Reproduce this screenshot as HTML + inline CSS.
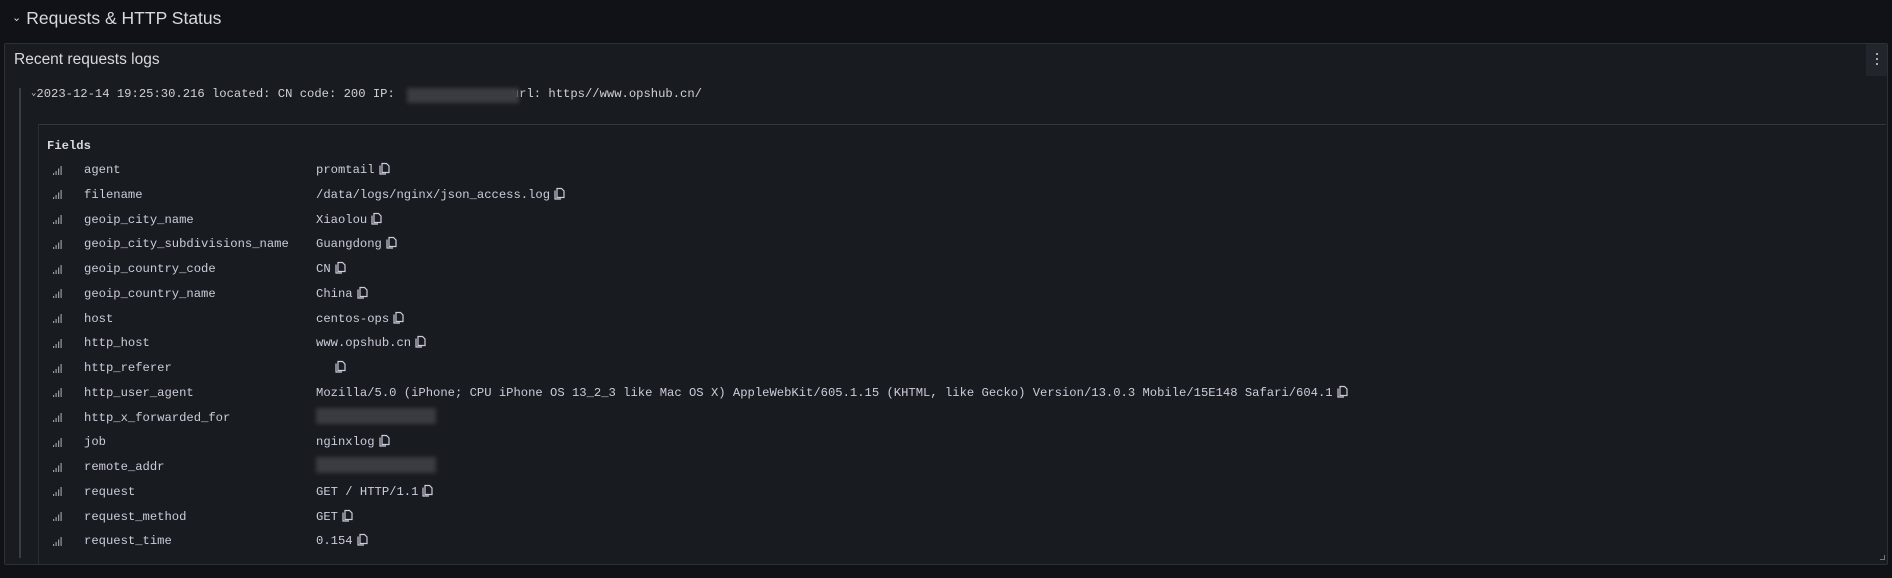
<!DOCTYPE html>
<html><head><meta charset="utf-8"><style>
*{margin:0;padding:0;box-sizing:border-box}
body{width:1892px;height:578px;background:#111217;color:#ccccdc;font-family:"Liberation Sans",sans-serif;overflow:hidden;position:relative}
.title{position:absolute;left:12px;top:8px;font-size:17.5px;color:#d8d9e0}
.title .chev{font-size:11px;margin-right:5px;position:relative;top:-3px}
.panel{position:absolute;left:4px;top:43px;width:1884px;height:522px;background:#181b1f;border:1px solid #2d3036;border-radius:2px}
.ptitle{position:absolute;left:9px;top:7px;font-size:15.5px;color:#d8d9e0}
.menu{position:absolute;right:0;top:0;width:21px;height:32px;background:#22252b;border-radius:2px}
.menu i{position:absolute;left:10px;width:2px;height:2px;background:#aaa}
.bar{position:absolute;left:14px;top:44px;width:2px;height:470px;background:#3a3d44}
.mono{font-family:"Liberation Mono",monospace;font-size:12.2px;white-space:pre}
.logline{position:absolute;left:26px;top:43px;color:#d0d1d8}
.blur{position:absolute;background:#3a3c42;filter:blur(2px)}
.fields{position:absolute;left:33px;top:80px;width:1848px;height:440px;border-top:1px solid #34373d;border-left:1px solid #2a2d33}
.fh{position:absolute;left:8px;top:14px;font-weight:bold;color:#d8d9e0}
.row{position:absolute;height:20px;line-height:20px}
.ic{position:absolute;top:0;height:20px;display:flex;align-items:center}
.k{position:absolute;top:0}
.v{position:absolute;top:0}
.cp{display:inline-block;vertical-align:-2px;margin-left:4px}
</style></head><body>
<div class="title"><span class="chev">⌄</span>Requests &amp; HTTP Status</div>
<div class="panel">
<div class="ptitle">Recent requests logs</div>
<div class="menu"><i style="top:9px"></i><i style="top:14px"></i><i style="top:19px"></i></div>
<div class="bar"></div>
<div class="logline mono"><span style="font-size:9px;position:relative;top:-2px">⌄</span>2023-12-14 19:25:30.216 located: CN code: 200 IP:                url: https//www.opshub.cn/</div>
<div class="blur" style="left:402px;top:44px;width:112px;height:15px"></div>
<div class="fields mono">
<div class="fh">Fields</div>
</div>
</div>
<div id="rows"></div>
<script>
var rows=[["agent","promtail"],["filename","/data/logs/nginx/json_access.log"],["geoip_city_name","Xiaolou"],["geoip_city_subdivisions_name","Guangdong"],["geoip_country_code","CN"],["geoip_country_name","China"],["host","centos-ops"],["http_host","www.opshub.cn"],["http_referer",""],["http_user_agent","Mozilla/5.0 (iPhone; CPU iPhone OS 13_2_3 like Mac OS X) AppleWebKit/605.1.15 (KHTML, like Gecko) Version/13.0.3 Mobile/15E148 Safari/604.1"],["http_x_forwarded_for",null],["job","nginxlog"],["remote_addr",null],["request","GET / HTTP/1.1"],["request_method","GET"],["request_time","0.154"]];
var ic='<svg width="9" height="9" viewBox="0 0 9 9"><rect x="0" y="7" width="1.2" height="2" fill="#9a9ba3"/><rect x="2.5" y="5" width="1.2" height="4" fill="#9a9ba3"/><rect x="5" y="2.5" width="1.2" height="6.5" fill="#9a9ba3"/><rect x="7.5" y="0" width="1.2" height="9" fill="#9a9ba3"/></svg>';
var cp='<svg class="cp" width="11" height="13" viewBox="0 0 11 13"><path d="M3 1.5h4.5l2.5 2.5v6.5H3z" fill="none" stroke="#ccccdc" stroke-width="1.2"/><path d="M1 3.5v8.5h6" fill="none" stroke="#ccccdc" stroke-width="1.2"/></svg>';
var h='';
rows.forEach(function(r,i){
 var y=160+i*24.75;
 var v = r[1]===null ? '<span style="display:inline-block;width:120px;height:16px;background:#3a3c42;filter:blur(2px);vertical-align:-3px"></span>' : (r[1]===''? '&nbsp;&nbsp;'+cp : r[1]+cp);
 h+='<div class="row mono" style="left:37px;top:'+y+'px;width:1800px"><div class="ic" style="left:16px">'+ic+'</div><div class="k" style="left:47px">'+r[0]+'</div><div class="v" style="left:279px">'+v+'</div></div>';
});
document.getElementById('rows').innerHTML=h;
</script>
<div style="position:absolute;left:1880px;top:555px;width:5px;height:5px;border-right:1px solid #777;border-bottom:1px solid #777"></div>
</body></html>
